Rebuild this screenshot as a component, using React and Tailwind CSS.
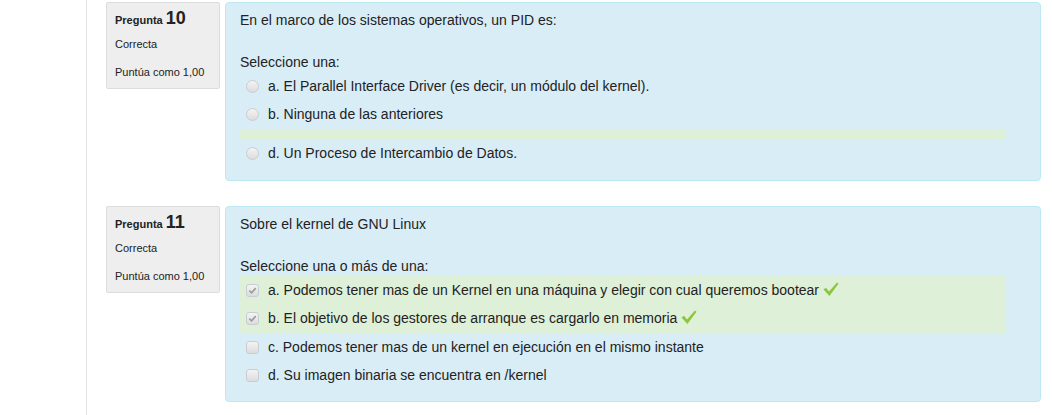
import React from 'react';

const font = { fontFamily: '"Liberation Sans", Arial, sans-serif' };

function Radio() {
    return (
        <span className="inline-block w-[13px] h-[13px] rounded-full border border-[#c8cdd1] bg-gradient-to-b from-[#f4f4f4] to-[#dcdcdc] shrink-0" />
    );
}

function Checkbox({ checked }) {
    return (
        <span className="inline-flex items-center justify-center w-[13px] h-[13px] rounded-[3px] border border-[#c8cdd1] bg-gradient-to-b from-[#f4f4f4] to-[#dcdcdc] shrink-0">
            {checked && (
                <svg width="9" height="9" viewBox="0 0 10 10">
                    <path d="M1.5 5.2 L4 7.6 L8.6 2.4" fill="none" stroke="#9a9a9a" strokeWidth="1.8" />
                </svg>
            )}
        </span>
    );
}

function Tick() {
    return (
        <svg width="16" height="16" viewBox="0 0 16 16" className="inline-block ml-[4px] -mt-[3px]">
            <path d="M0.5 8.5 L3 6.8 L6 10.5 L14 1.5 L15.5 2.8 L6.4 15 Z" fill="#8cc63f" />
        </svg>
    );
}

function Info({ number }) {
    return (
        <div className="w-[114px] shrink-0 self-start bg-[#eeeeee] border border-[#dddddd] rounded-[2px] px-[8px] pt-[5px] pb-[8px] text-[11px] text-[#222]">
            <div className="h-[21px] leading-[20px]">
                <span className="font-bold">Pregunta </span>
                <span className="font-bold text-[18px]">{number}</span>
            </div>
            <div className="mt-[7px] leading-[16px]">Correcta</div>
            <div className="mt-[12px] leading-[16px]">Puntúa como 1,00</div>
        </div>
    );
}

function Option({ children, correct }) {
    return (
        <div className={`h-[28px] flex items-center pl-[6px] ${correct ? 'bg-[#dff0d8]' : ''}`}>
            {children}
        </div>
    );
}

export default function App() {
    return (
        <div className="flex bg-white w-[1052px] h-[415px] overflow-hidden text-[#222]" style={font}>
            <div className="w-[87px] shrink-0 border-r border-[#e5e5e5]" />
            <div className="flex-1 pl-[19px] pt-[2px]">
                {/* Pregunta 10 */}
                <div className="flex">
                    <Info number="10" />
                    <div className="ml-[5px] w-[816px] bg-[#d9edf7] border border-[#bce8f1] rounded-[4px] px-[14px] pt-[7px] pb-[13px] text-[14px]">
                        <div className="leading-[20px]">En el marco de los sistemas operativos, un PID es:</div>
                        <div className="mt-[22px] leading-[20px]">Seleccione una:</div>
                        <div className="w-[765px]">
                            <Option>
                                <Radio />
                                <span className="ml-[9px]">a. El Parallel Interface Driver (es decir, un módulo del kernel).</span>
                            </Option>
                            <Option>
                                <Radio />
                                <span className="ml-[9px]">b. Ninguna de las anteriores</span>
                            </Option>
                            <div className="mt-[2px] h-[9px] bg-[#dff0d8]" />
                            <Option>
                                <Radio />
                                <span className="ml-[9px]">d. Un Proceso de Intercambio de Datos.</span>
                            </Option>
                        </div>
                    </div>
                </div>

                {/* Pregunta 11 */}
                <div className="flex mt-[25px]">
                    <Info number="11" />
                    <div className="ml-[5px] w-[816px] bg-[#d9edf7] border border-[#bce8f1] rounded-[4px] px-[14px] pt-[7px] pb-[12px] text-[14px]">
                        <div className="leading-[20px]">Sobre el kernel de GNU Linux</div>
                        <div className="mt-[22px] leading-[20px]">Seleccione una o más de una:</div>
                        <div className="w-[765px]">
                            <div className="bg-[#dff0d8] pb-[1px]">
                                <Option>
                                    <Checkbox checked />
                                    <span className="ml-[9px]">a. Podemos tener mas de un Kernel en una máquina y elegir con cual queremos bootear</span>
                                    <Tick />
                                </Option>
                                <Option>
                                    <Checkbox checked />
                                    <span className="ml-[9px]">b. El objetivo de los gestores de arranque es cargarlo en memoria</span>
                                    <Tick />
                                </Option>
                            </div>
                            <Option>
                                <Checkbox />
                                <span className="ml-[9px]">c. Podemos tener mas de un kernel en ejecución en el mismo instante</span>
                            </Option>
                            <Option>
                                <Checkbox />
                                <span className="ml-[9px]">d. Su imagen binaria se encuentra en /kernel</span>
                            </Option>
                        </div>
                    </div>
                </div>
            </div>
        </div>
    );
}
